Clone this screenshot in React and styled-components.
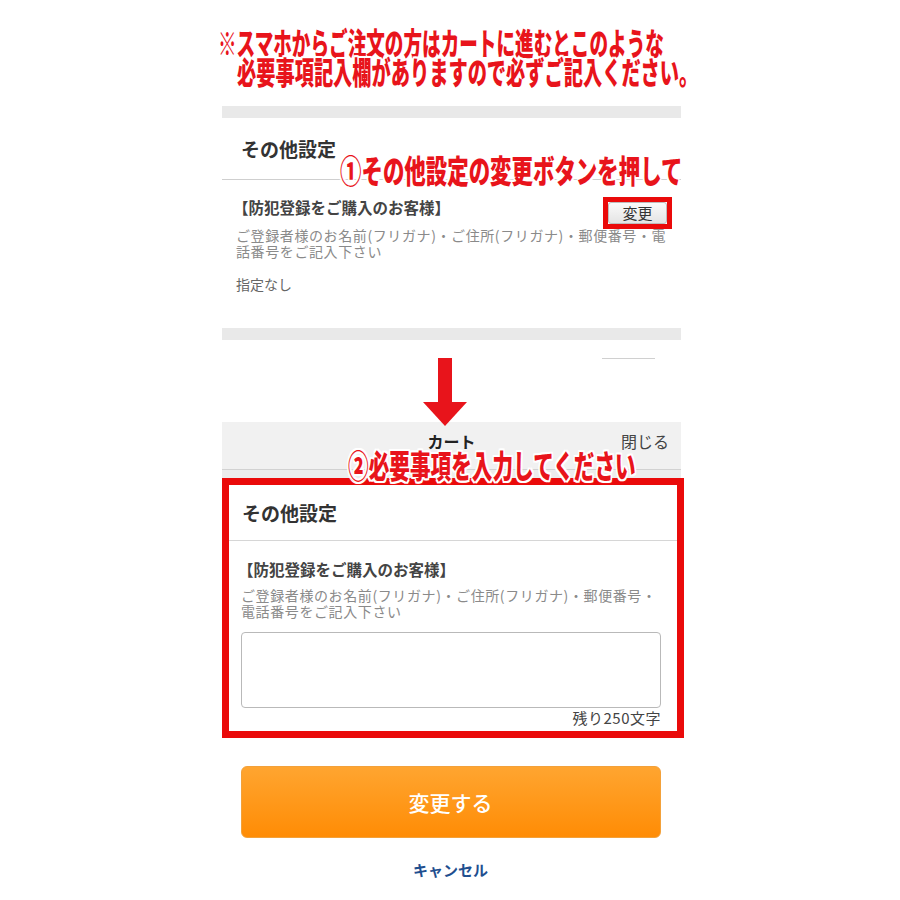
import React from "react";
import styled, { createGlobalStyle } from "styled-components";

const GlobalStyle = createGlobalStyle`
  html, body {
    margin: 0;
    padding: 0;
    background: #fff;
    overflow: hidden;
  }
  body {
    font-family: "Noto Sans CJK JP", "Noto Sans", sans-serif;
    color: #333;
  }
`;

const Page = styled.div`
  width: 900px;
  min-height: 900px;
  padding-top: 27px;
  box-sizing: border-box;
`;

const glow = `
  2px 0 0 #fff, -2px 0 0 #fff, 0 2px 0 #fff, 0 -2px 0 #fff,
  2px 2px 0 #fff, -2px -2px 0 #fff, 2px -2px 0 #fff, -2px 2px 0 #fff,
  0 0 4px #fff
`;

const Caption = styled.div`
  display: flex;
  flex-direction: column;
  color: #e8141b;
  font-weight: 900;
  font-size: 31px;
  line-height: 29px;
  white-space: nowrap;
`;

const CaptionLine = styled.span`
  display: block;
  padding-left: ${(p) => p.$indent}px;
  transform: scaleX(${(p) => p.$scale});
  transform-origin: ${(p) => p.$indent}px 0;
  text-shadow: ${glow};
`;

const Sheet = styled.div`
  width: 459px;
  margin: 21px 0 0 222px;
  position: relative;
`;

const Bar = styled.div`
  height: 12px;
  background: #e9e9e9;
`;

const Panel = styled.div`
  position: relative;
  background: #fff;
`;

const PanelHead = styled.div`
  height: 61px;
  display: flex;
  align-items: center;
  padding-left: 19px;
  border-bottom: 1px solid #cfcfcf;
  font-size: 19px;
  font-weight: 700;
  color: #333;
`;

const PanelBody = styled.div`
  position: relative;
  padding: 17px 8px 34px 14px;
`;

const ItemTitle = styled.div`
  font-size: 15.5px;
  line-height: 20px;
  font-weight: 700;
  color: #444;
  margin-left: -3px;
`;

const Note = styled.div`
  margin-top: ${(p) => p.$gap}px;
  font-size: 14px;
  line-height: 16px;
  letter-spacing: 0.6px;
  color: #8a8a8a;
  white-space: nowrap;
`;

const Value = styled.div`
  margin-top: 15px;
  font-size: 14px;
  line-height: 20px;
  color: #666;
`;

const Callout = styled.div`
  position: absolute;
  left: ${(p) => p.$left}px;
  top: ${(p) => p.$top}px;
  z-index: 2;
  color: #e8141b;
  font-weight: 900;
  font-size: 32px;
  line-height: 33px;
  white-space: nowrap;
  transform: scaleX(${(p) => p.$scale});
  transform-origin: 0 0;
  text-shadow: ${glow};
`;

const Mark = styled.div`
  position: absolute;
  top: 17px;
  right: 9px;
  border: 5px solid #ea0a0a;
  display: flex;
`;

const SmallButton = styled.button`
  width: 59px;
  height: 22px;
  padding: 0;
  border: 1px solid #bdbdbd;
  border-radius: 3px;
  background: linear-gradient(#fafafa, #e4e4e4);
  font-family: inherit;
  font-size: 15px;
  line-height: 20px;
  color: #333;
`;

const Gap = styled.div`
  height: 82px;
  display: flex;
  align-items: flex-start;
`;

const Arrow = styled.svg`
  margin: 18px 0 0 201px;
  position: relative;
  z-index: 1;
  flex: none;
`;

const Stub = styled.div`
  width: 53px;
  height: 1px;
  margin: 18px 0 0 135px;
  background: #d0d0d0;
`;

const Modal = styled.div`
  position: relative;
`;

const ModalHead = styled.div`
  height: 48px;
  display: grid;
  grid-template-columns: 1fr auto 1fr;
  align-items: start;
  padding: 9px 12px 0;
  box-sizing: border-box;
  background: #f1f1f1;
  border-bottom: 1px solid #d2d2d2;
  font-size: 16px;
  line-height: 20px;
`;

const ModalTitle = styled.div`
  grid-column: 2;
  font-weight: 700;
  color: #222;
`;

const Close = styled.div`
  justify-self: end;
  color: #444;
`;

const ModalBody = styled.div`
  background: #ececec;
  padding-top: 8px;
`;

const Highlight = styled.div`
  margin-right: -3px;
  border: 7px solid #ea0a0a;
  background: #fff;
`;

const CardHead = styled.div`
  height: 55px;
  display: flex;
  align-items: center;
  padding-left: 13px;
  border-bottom: 1px solid #d6d6d6;
  font-size: 19px;
  font-weight: 700;
  color: #333;
`;

const CardBody = styled.div`
  padding: 18px 16px 4px 12px;
`;

const Field = styled.textarea`
  display: block;
  width: 100%;
  height: 76px;
  margin-top: 13px;
  box-sizing: border-box;
  border: 1px solid #b9b9b9;
  border-radius: 4px;
  resize: none;
  background: #fff;
`;

const Counter = styled.div`
  margin-top: 1px;
  text-align: right;
  font-size: 15px;
  line-height: 18px;
  letter-spacing: 0.5px;
  color: #444;
`;

const Actions = styled.div`
  background: #fff;
  display: flex;
  flex-direction: column;
  align-items: center;
  padding-top: 28px;
`;

const Submit = styled.button`
  width: 420px;
  height: 72px;
  margin-left: -2px;
  border: 1px solid #f3a13a;
  border-radius: 6px;
  background: linear-gradient(#ffa530, #ff8c05);
  color: #fff;
  font-family: inherit;
  font-size: 21px;
  font-weight: 500;
`;

const Cancel = styled.a`
  margin: 22px 0 0 -2px;
  font-size: 15px;
  line-height: 20px;
  font-weight: 700;
  color: #1f4f8f;
  text-decoration: none;
`;

export default function App() {
  return (
    <Page>
      <GlobalStyle />
      <Caption>
        <CaptionLine $indent={218} $scale={0.6}>※スマホからご注文の方はカートに進むとこのような</CaptionLine>
        <CaptionLine $indent={237} $scale={0.62}>必要事項記入欄がありますので必ずご記入ください。</CaptionLine>
      </Caption>
      <Sheet>
        <Bar />
        <Panel>
          <PanelHead>その他設定</PanelHead>
          <Callout $left={118} $top={35} $scale={0.67}>①その他設定の変更ボタンを押して</Callout>
          <PanelBody>
            <ItemTitle>【防犯登録をご購入のお客様】</ItemTitle>
            <Note $gap={10}>
              ご登録者様のお名前(フリガナ)・ご住所(フリガナ)・郵便番号・電
              <br />
              話番号をご記入下さい
            </Note>
            <Value>指定なし</Value>
            <Mark>
              <SmallButton>変更</SmallButton>
            </Mark>
          </PanelBody>
        </Panel>
        <Bar />
        <Gap>
          <Arrow width="44" height="68" viewBox="0 0 44 68">
            <rect x="15" y="0" width="14" height="47" fill="#e8141b" />
            <polygon points="0,44 44,44 22,68" fill="#e8141b" />
          </Arrow>
          <Stub />
        </Gap>
        <Modal>
          <ModalHead>
            <ModalTitle>カート</ModalTitle>
            <Close>閉じる</Close>
          </ModalHead>
          <Callout $left={126} $top={26} $scale={0.645}>②必要事項を入力してください</Callout>
          <ModalBody>
            <Highlight>
              <CardHead>その他設定</CardHead>
              <CardBody>
                <ItemTitle>【防犯登録をご購入のお客様】</ItemTitle>
                <Note $gap={8}>
                  ご登録者様のお名前(フリガナ)・ご住所(フリガナ)・郵便番号・
                  <br />
                  電話番号をご記入下さい
                </Note>
                <Field />
                <Counter>残り250文字</Counter>
              </CardBody>
            </Highlight>
          </ModalBody>
          <Actions>
            <Submit>変更する</Submit>
            <Cancel href="#">キャンセル</Cancel>
          </Actions>
        </Modal>
      </Sheet>
    </Page>
  );
}
